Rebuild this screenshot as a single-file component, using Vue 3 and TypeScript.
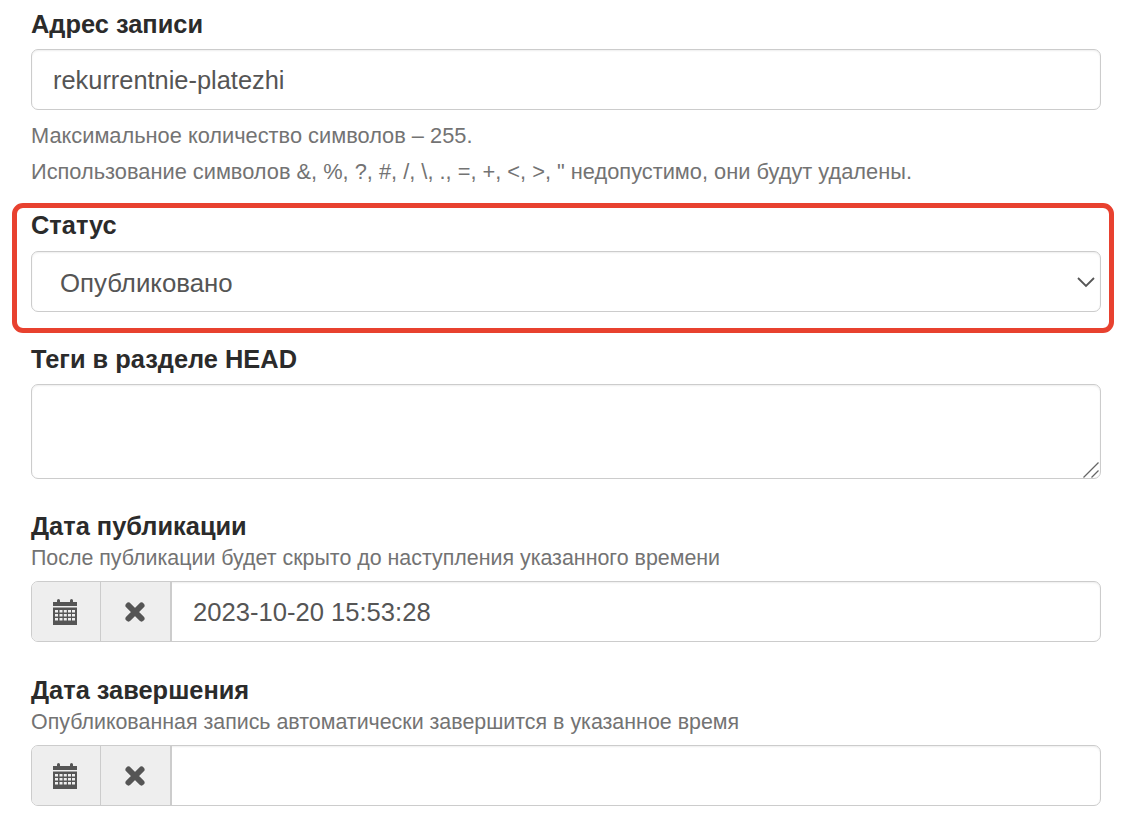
<script setup lang="ts">
import { ref } from 'vue'

interface DateField {
  label: string
  hint: string
  value: string
}

const address = ref('rekurrentnie-platezhi')
const head = ref('')
const dates = ref<DateField[]>([
  { label: 'Дата публикации', hint: 'После публикации будет скрыто до наступления указанного времени', value: '2023-10-20 15:53:28' },
  { label: 'Дата завершения', hint: 'Опубликованная запись автоматически завершится в указанное время', value: '' },
])
</script>

<template>
  <div class="page">
    <form class="form" @submit.prevent>
      <section class="field first">
        <label class="label">Адрес записи</label>
        <input v-model="address" class="control text" type="text" />
        <p class="help help-a">Максимальное количество символов – 255.</p>
        <p class="help help-b">Использование символов &amp;, %, ?, #, /, \, ., =, +, &lt;, &gt;, " недопустимо, они будут удалены.</p>
      </section>

      <section class="field status">
        <label class="label">Статус</label>
        <div class="select-wrap">
          <select class="control select">
            <option>Опубликовано</option>
          </select>
          <svg class="chevron" viewBox="0 0 18 12" width="18" height="12" aria-hidden="true">
            <path d="M1 2 L9 10 L17 2" fill="none" stroke="#555" stroke-width="1.8" />
          </svg>
        </div>
        <div class="highlight"></div>
      </section>

      <section class="field">
        <label class="label">Теги в разделе HEAD</label>
        <div class="area-wrap">
          <textarea v-model="head" class="control area"></textarea>
          <svg class="grip" viewBox="0 0 16 16" width="16" height="16" aria-hidden="true">
            <path d="M0.500 15.500 L15.500 0.500 M8.500 15.500 L15.500 8.500" stroke="#666" stroke-width="1.3" fill="none" />
          </svg>
        </div>
      </section>

      <section v-for="d in dates" :key="d.label" class="field date-field">
        <label class="label">{{ d.label }}</label>
        <p class="hint">{{ d.hint }}</p>
        <div class="group">
          <span class="addon addon-cal">
            <svg viewBox="0 0 24 26" width="24" height="26" aria-hidden="true">
              <path fill="#555" fill-rule="evenodd" d="M0 3h4V1.500a1.500 1.500 0 0 1 3 0V3h10V1.500a1.500 1.500 0 0 1 3 0V3h4v4H0zM0 8.500h24V26H0zM2 11v2.500h3V11zM6.500 11v2.500h3V11zM10.800 11v2.500h3V11zM15 11v2.500h3V11zM19 11v2.500h3V11zM2 15v2.500h3V15zM6.500 15v2.500h3V15zM10.800 15v2.500h3V15zM15 15v2.500h3V15zM19 15v2.500h3V15zM2 19v2.500h3V19zM6.500 19v2.500h3V19zM10.800 19v2.500h3V19zM15 19v2.500h3V19zM19 19v2.500h3V19z" />
            </svg>
          </span>
          <span class="addon addon-x">
            <svg viewBox="0 0 22 22" width="22" height="22" aria-hidden="true">
              <path d="M4.500 4.500 L17.500 17.500 M17.500 4.500 L4.500 17.500" stroke="#555" stroke-width="6" stroke-linecap="round" fill="none" />
            </svg>
          </span>
          <input v-model="d.value" class="date-input" type="text" />
        </div>
      </section>
    </form>
  </div>
</template>

<style scoped>
.page {
  width: 1121px;
  height: 815px;
  overflow: hidden;
  background: #fff;
  font-family: "Liberation Sans", Arial, sans-serif;
  color: #333;
  box-sizing: border-box;
  padding: 10px 20px 0 31px;
}
.form {
  width: 1070px;
}
.field {
  margin-top: 33px;
}
.field.first {
  margin-top: 0;
}
.field.status {
  position: relative;
  margin-top: 26px;
}
.date-field {
  padding-bottom: 1px;
}
.label {
  display: block;
  font-size: 25.4px;
  font-weight: 700;
  line-height: 28px;
  color: #2b2b2b;
  margin-bottom: 11px;
}
.status .label {
  margin-bottom: 12px;
}
.control {
  display: block;
  width: 100%;
  box-sizing: border-box;
  border: 1px solid #ccc;
  border-radius: 7px;
  background: #fff;
  font-family: inherit;
  font-size: 25.4px;
  color: #555;
  box-shadow: inset 0 1px 2px rgba(0, 0, 0, 0.07);
  outline: none;
}
.text {
  height: 61px;
  padding: 2px 21px 0;
}
.help {
  margin: 0;
  font-size: 21.8px;
  line-height: 26px;
  color: #737373;
}
.help-a {
  margin-top: 13px;
}
.help-b {
  margin-top: 10px;
}
.select-wrap {
  position: relative;
}
.select {
  height: 61px;
  padding: 2px 28px 0;
  font-size: 25.8px;
  appearance: none;
  -webkit-appearance: none;
}
.chevron {
  position: absolute;
  right: 6px;
  top: 25px;
}
.highlight {
  position: absolute;
  left: -19px;
  right: -13px;
  top: -8px;
  height: 130px;
  box-sizing: border-box;
  border: 5px solid #e8412f;
  border-radius: 11px;
  pointer-events: none;
}
.area-wrap {
  position: relative;
}
.area {
  height: 95px;
  padding: 10px 21px;
  resize: none;
}
.grip {
  position: absolute;
  right: 2px;
  bottom: 1px;
  pointer-events: none;
}
.hint {
  margin: -6px 0 10px;
  font-size: 21.4px;
  line-height: 26px;
  color: #737373;
}
.group {
  display: flex;
  height: 61px;
  box-sizing: border-box;
  border: 1px solid #ccc;
  border-radius: 7px;
  overflow: hidden;
  box-shadow: inset 0 1px 2px rgba(0, 0, 0, 0.07);
}
.addon {
  flex: none;
  box-sizing: border-box;
  width: 69px;
  display: flex;
  align-items: center;
  justify-content: center;
  background: #eee;
  border-right: 1px solid #ccc;
}
.addon-cal {
  padding-right: 2px;
}
.addon-x {
  width: 71px;
  border-right-width: 2px;
  padding-right: 1px;
}
.date-input {
  flex: 1;
  min-width: 0;
  border: none;
  outline: none;
  background: transparent;
  padding: 2px 21px 0;
  font-family: inherit;
  font-size: 25.6px;
  color: #555;
}
</style>
